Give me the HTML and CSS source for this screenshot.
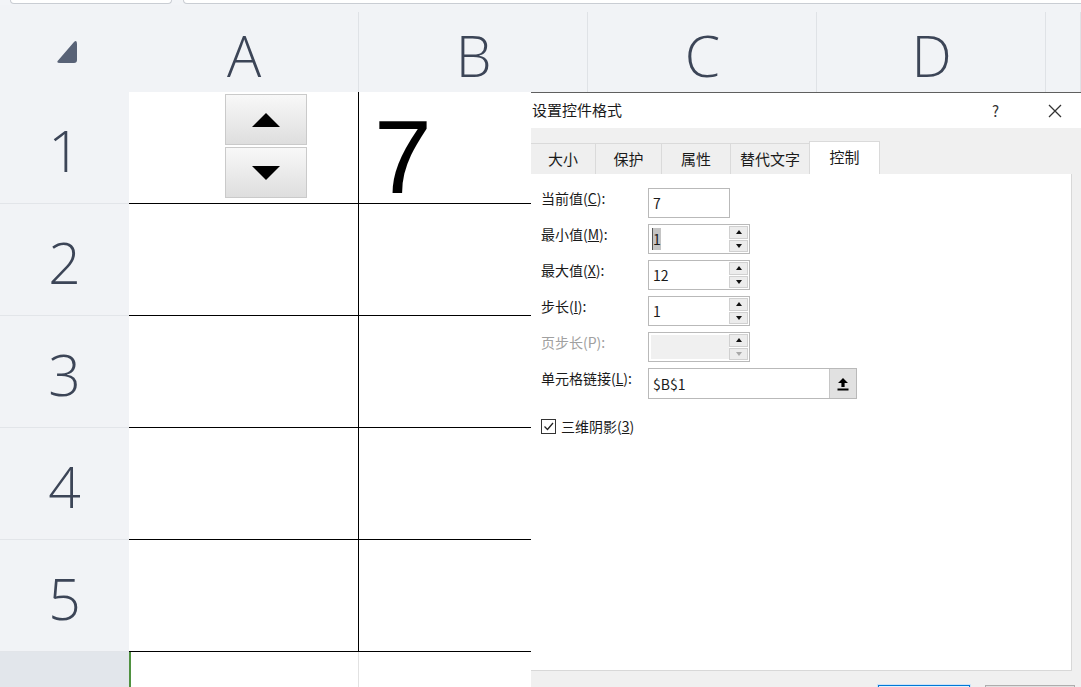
FILE: index.html
```html
<!DOCTYPE html>
<html lang="zh-CN">
<head>
<meta charset="utf-8">
<title>设置控件格式</title>
<link rel="stylesheet" href="styles.css">
</head>
<body>
<div class="app">
  <div class="topbar"><div class="ttab t1"></div><div class="ttab t2"></div></div>
  <div class="sheet">
    <div class="corner"><svg width="22" height="24" viewBox="0 0 22 24"><path d="M18 2 Q21 -0.5 21 4 V20 Q21 23 18 23 H4 Q-0.5 23 2.5 20 Z" fill="#586276"/></svg></div>
    <div class="colhead">A</div>
    <div class="colhead">B</div>
    <div class="colhead">C</div>
    <div class="colhead">D</div>
    <div class="colhead"></div>

    <div class="rowhead">1</div>
    <div class="cell ca">
      <div class="spinner">
        <div class="sbtn"><svg width="30" height="16" viewBox="0 0 30 16"><path d="M15 1 L29 15 H1 Z" fill="#000"/></svg></div>
        <div class="sbtn"><svg width="30" height="16" viewBox="0 0 30 16"><path d="M1 1 H29 L15 15 Z" fill="#000"/></svg></div>
      </div>
    </div>
    <div class="cell cb"><span class="big">7</span></div>
    <div class="cell"></div><div class="cell"></div><div class="cell"></div>

    <div class="rowhead">2</div>
    <div class="cell ca"></div><div class="cell cb"></div><div class="cell"></div><div class="cell"></div><div class="cell"></div>
    <div class="rowhead">3</div>
    <div class="cell ca"></div><div class="cell cb"></div><div class="cell"></div><div class="cell"></div><div class="cell"></div>
    <div class="rowhead">4</div>
    <div class="cell ca"></div><div class="cell cb"></div><div class="cell"></div><div class="cell"></div><div class="cell"></div>
    <div class="rowhead">5</div>
    <div class="cell ca"></div><div class="cell cb"></div><div class="cell"></div><div class="cell"></div><div class="cell"></div>

    <div class="rowhead r6"></div>
    <div class="cell6 sel"></div><div class="cell6"></div><div class="cell6"></div><div class="cell6"></div><div class="cell6"></div>
  </div>

  <div class="dialog">
    <div class="titlebar">
      <span class="title">设置控件格式</span>
      <span class="help">?</span>
      <span class="close"><svg width="14" height="14" viewBox="0 0 14 14"><path d="M1 1 L13 13 M13 1 L1 13" stroke="#333" stroke-width="1.3"/></svg></span>
    </div>
    <div class="tabstrip">
      <div class="tab w1">大小</div>
      <div class="tab w2">保护</div>
      <div class="tab w3">属性</div>
      <div class="tab w4">替代文字</div>
      <div class="tab active">控制</div>
    </div>
    <div class="panel">
      <div class="frow">
        <div class="label">当前值(<u>C</u>):</div>
        <div class="field short"><span class="val">7</span></div>
      </div>
      <div class="frow">
        <div class="label">最小值(<u>M</u>):</div>
        <div class="field spin"><span class="val"><span class="hl">1</span></span>
          <div class="arrows"><div class="ab"><i class="up"></i></div><div class="ab"><i class="dn"></i></div></div></div>
      </div>
      <div class="frow">
        <div class="label">最大值(<u>X</u>):</div>
        <div class="field spin"><span class="val">12</span>
          <div class="arrows"><div class="ab"><i class="up"></i></div><div class="ab"><i class="dn"></i></div></div></div>
      </div>
      <div class="frow">
        <div class="label">步长(<u>I</u>):</div>
        <div class="field spin"><span class="val">1</span>
          <div class="arrows"><div class="ab"><i class="up"></i></div><div class="ab"><i class="dn"></i></div></div></div>
      </div>
      <div class="frow">
        <div class="label disabled">页步长(P):</div>
        <div class="field spin off"><span class="val"></span>
          <div class="arrows"><div class="ab"><i class="up"></i></div><div class="ab"><i class="dn light"></i></div></div></div>
      </div>
      <div class="frow link">
        <div class="label">单元格链接(<u>L</u>):</div>
        <div class="field wide"><span class="val">$B$1</span>
          <div class="pick"><svg width="12" height="14" viewBox="0 0 12 14"><path d="M6 1 L11 6 H7.6 V10 H4.4 V6 H1 Z" fill="#000"/><rect x="0.5" y="11.5" width="11" height="2" fill="#000"/></svg></div>
        </div>
      </div>
      <div class="check">
        <span class="box"><svg width="13" height="13" viewBox="0 0 13 13"><path d="M2.5 6.5 L5.5 9.5 L11 3" fill="none" stroke="#222" stroke-width="1.3"/></svg></span>
        <span class="clabel">三维阴影(<u>3</u>)</span>
      </div>
    </div>
    <div class="bottom">
      <div class="btn ok"></div>
      <div class="btn cancel"></div>
    </div>
  </div>
</div>
</body>
</html>
```
FILE: styles.css
```css
* { box-sizing: border-box; }
html, body { margin: 0; padding: 0; }
body {
  width: 1081px;
  height: 687px;
  overflow: hidden;
  background: #f2f4f7;
  font-family: "Noto Sans CJK SC", "Noto Sans", sans-serif;
}
.app { position: relative; width: 1081px; height: 687px; }

.topbar { height: 5px; display: flex; gap: 11px; padding-left: 10px; }
.ttab {
  height: 4px;
  background: #fff;
  border: 1px solid #c9cdd3;
  border-top: none;
  border-radius: 0 0 6px 6px;
}
.t1 { width: 162px; }
.t2 { flex: 1; margin-right: -10px; }

.sheet {
  display: grid;
  grid-template-columns: 129px 230px 229px 229px 229px 1fr;
  grid-template-rows: 87px repeat(5, 112px) 1fr;
  height: 682px;
}
.corner {
  background: #f1f3f6;
  display: flex;
  align-items: center;
  justify-content: center;
  padding: 6px 0 0 4px;
}
.colhead {
  background: linear-gradient(#dfe2e6, #dfe2e6) right 7px / 1px calc(100% - 7px) no-repeat, #f1f3f6;
  color: #3c4557;
  font-family: "Open Sans", "Noto Sans", sans-serif;
  font-weight: 300;
  font-size: 57px;
  line-height: 1;
  display: flex;
  align-items: center;
  justify-content: center;
  padding-top: 14px;
}
.rowhead {
  background: #f1f3f6;
  border-bottom: 1px solid #e2e5e9;
  color: #3c4557;
  font-family: "Open Sans", "Noto Sans", sans-serif;
  font-weight: 300;
  font-size: 57px;
  line-height: 1;
  display: flex;
  align-items: center;
  justify-content: center;
  padding-top: 6px;
}
.rowhead.r6 { background: #e2e6eb; border-bottom: none; }
.cell {
  background: #fff;
  border-bottom: 1px solid #000;
  border-right: 1px solid #000;
}
.cell.ca { position: relative; }
.cell6 { background: #fff; border-right: 1px solid #e2e2e2; }
.cell6.sel { box-shadow: inset 2px 0 0 #4f9140; }

.spinner {
  position: absolute;
  left: 96px;
  top: 2px;
  width: 82px;
  display: flex;
  flex-direction: column;
  gap: 2px;
}
.sbtn {
  height: 51px;
  border: 1px solid #cacaca;
  background: linear-gradient(#f8f8f8, #dedede);
  display: flex;
  align-items: center;
  justify-content: center;
}
.big {
  display: block;
  font-family: "Liberation Sans", Arial, sans-serif;
  font-size: 104px;
  line-height: 104px;
  padding: 13px 0 0 15px;
  color: #000;
}

/* dialog */
.dialog {
  position: absolute;
  left: 531px;
  top: 92px;
  width: 550px;
  height: 595px;
  background: #f0f0f0;
  border-top: 1px solid #5f5f5f;
  display: flex;
  flex-direction: column;
  color: #1a1a1a;
}
.titlebar {
  height: 35px;
  background: #fff;
  display: flex;
  align-items: center;
  font-size: 15px;
}
.title { padding-left: 1px; flex: 1; margin-top: -2px; }
.help { width: 14px; margin-right: 42px; font-size: 15px; color: #333; }
.close { width: 14px; height: 14px; margin-right: 19px; display: flex; }

.tabstrip {
  height: 46px;
  display: flex;
  align-items: flex-end;
  font-size: 15px;
}
.tab {
  height: 31px;
  border-top: 1px solid #dadada;
  border-right: 1px solid #dadada;
  background: #efefef;
  display: flex;
  align-items: center;
  justify-content: center;
  padding-bottom: 2px;
}
.w1 { width: 65px; }
.w2 { width: 66px; }
.w3 { width: 69px; }
.w4 { width: 79px; }
.tab.active {
  width: 71px;
  height: 33px;
  background: #fff;
  border-left: 1px solid #dadada;
  margin-left: -1px;
  padding-bottom: 4px;
}

.panel {
  height: 497px;
  margin-right: 9px;
  background: #fff;
  border-right: 1px solid #d8d8d8;
  border-bottom: 1px solid #d8d8d8;
  padding: 14px 0 0 10px;
  display: flex;
  flex-direction: column;
  gap: 6px;
  font-size: 14px;
}
.frow { display: flex; align-items: flex-start; height: 30px; }
.frow.link { height: 31px; }
.label { width: 107px; line-height: 20px; white-space: nowrap; }
.label.disabled { color: #a0a0a0; }
.field {
  height: 30px;
  border: 1px solid #b9b9b9;
  background: #fff;
  display: flex;
  align-items: center;
  position: relative;
}
.field.short { width: 82px; }
.field.spin { width: 102px; }
.field.wide { width: 209px; height: 31px; }
.field.off .val { align-self: stretch; flex: 1; background: #f0f0f0; margin: 2px 0 2px 2px; }
.val { flex: 1; padding-left: 4px; font-size: 14px; line-height: 20px; }
.hl { background: #c4c4c4; padding: 1px 0; box-shadow: -1px 0 0 #555; }
.arrows {
  width: 20px;
  align-self: stretch;
  display: flex;
  flex-direction: column;
  gap: 1px;
  padding: 1px 1px 1px 0;
}
.ab {
  flex: 1;
  background: #ececec;
  border: 1px solid #d0d0d0;
  display: flex;
  align-items: center;
  justify-content: center;
}
.up { width: 0; height: 0; border-left: 3.5px solid transparent; border-right: 3.5px solid transparent; border-bottom: 4px solid #111; }
.dn { width: 0; height: 0; border-left: 3.5px solid transparent; border-right: 3.5px solid transparent; border-top: 4px solid #111; }
.dn.light { border-top-color: #a8a8a8; }
.pick {
  width: 27px;
  align-self: stretch;
  background: #e1e1e1;
  border-left: 1px solid #c6c6c6;
  display: flex;
  align-items: center;
  justify-content: center;
}
.check { display: flex; align-items: center; gap: 5px; margin-top: 13px; height: 16px; }
.box { width: 15px; height: 15px; border: 1px solid #333; display: flex; align-items: center; justify-content: center; background: #fff; }
.clabel { font-size: 14px; }

.bottom {
  flex: 1;
  display: flex;
  justify-content: flex-end;
  padding-top: 14px;
  gap: 15px;
  padding-right: 6px;
  overflow: hidden;
}
.btn { height: 24px; }
.btn.ok { width: 92px; border: 1px solid #0078d7; box-shadow: 0 0 0 1px #cde3f7; background: #e5f1fb; }
.btn.cancel { width: 90px; border: 1px solid #adadad; background: #e1e1e1; }
```
